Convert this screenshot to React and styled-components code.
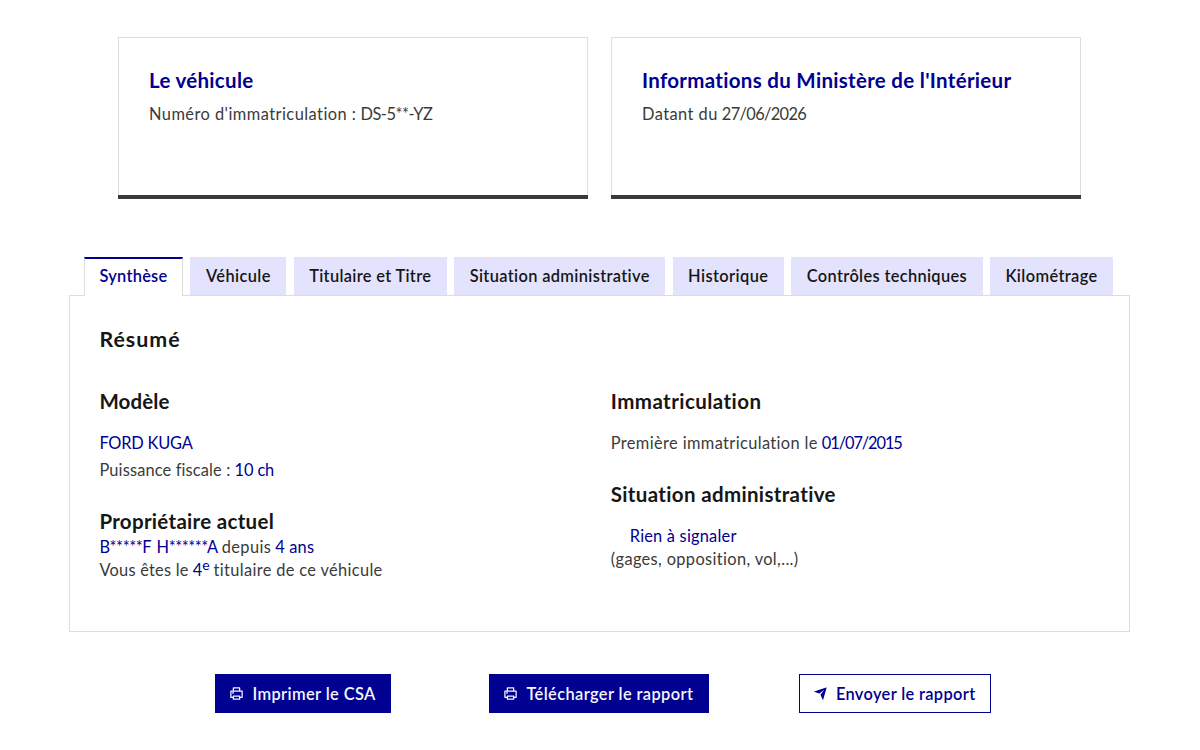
import React from "react";
import styled, { createGlobalStyle } from "styled-components";

const GlobalStyle = createGlobalStyle`
  * {
    box-sizing: border-box;
  }
  body {
    margin: 0;
    background-color: #ffffff;
    color: #3a3a3a;
    font-family: Lato, "Open Sans", sans-serif;
    font-size: 16.4px;
    line-height: 23px;
  }
  h2, h3, p {
    margin: 0;
  }
`;

const Page = styled.div`
  width: 1200px;
  height: 750px;
  padding: 37px 70px 0 69px;
  overflow: hidden;
`;

const Cards = styled.div`
  display: flex;
  gap: 23px;
  padding: 0 49px;
`;

const Card = styled.div`
  width: 470px;
  height: 162px;
  padding-bottom: 4px;
  background-color: #3a3a3a;
`;

const CardBody = styled.div`
  height: 100%;
  padding: 29px 30px;
  border: 1px solid #dddddd;
  border-bottom: 0;
  background-color: #ffffff;
`;

const Title = styled.h3`
  color: ${(p) => (p.$blue ? "#000091" : "#161616")};
  font-size: ${(p) => p.$size || 20.5}px;
  font-weight: 700;
  line-height: 27px;
  letter-spacing: ${(p) => p.$ls || 0.3}px;
  white-space: nowrap;
`;

const Text = styled.p`
  display: flex;
  align-items: baseline;
  gap: 4px;
  margin-top: ${(p) => p.$top || 0}px;
  padding-left: ${(p) => p.$indent || 0}px;
  height: 23px;
  white-space: nowrap;
`;

const Part = styled.span`
  color: ${(p) => (p.$blue ? "#000091" : "inherit")};
  letter-spacing: ${(p) => p.$ls || 0}px;
  word-spacing: ${(p) => p.$ws || 0}px;

  sup {
    font-size: 14px;
    line-height: 0;
    vertical-align: 6px;
  }
`;

const Tabs = styled.div`
  display: flex;
  gap: 7.4px;
  margin-top: 58px;
  padding-left: 15px;
`;

const Tab = styled.button`
  position: relative;
  height: 38px;
  margin: 0;
  padding: 0 15.5px 1px;
  border: 0;
  background-color: #e3e3fd;
  color: #161616;
  font-family: inherit;
  font-size: 16.4px;
  font-weight: 600;
  letter-spacing: ${(p) => p.$ls}px;
  white-space: nowrap;
  cursor: pointer;

  &[aria-selected="true"] {
    height: 39px;
    margin-bottom: -1px;
    padding: 0 14.5px 4px;
    border: 1px solid #dddddd;
    border-top: 2px solid #000091;
    border-bottom: 0;
    background-color: #ffffff;
    color: #000091;
  }
`;

const Panel = styled.div`
  height: 337px;
  padding: 30px 30px 30px 29.4px;
  border: 1px solid #dddddd;
`;

const Columns = styled.div`
  display: grid;
  grid-template-columns: 511.4px 1fr;
  margin-top: 35px;
`;

const Block = styled.div`
  margin-bottom: 27px;
`;

const Actions = styled.div`
  display: flex;
  margin-top: 42.4px;
  padding-left: 146.4px;
`;

const Button = styled.button`
  display: flex;
  align-items: center;
  gap: ${(p) => p.$space || 8}px;
  width: ${(p) => p.$w}px;
  height: 39px;
  margin-right: ${(p) => p.$gap || 0}px;
  padding: 0 0 0 13px;
  border: 1px solid #000091;
  background-color: ${(p) => (p.$outline ? "#ffffff" : "#000091")};
  color: ${(p) => (p.$outline ? "#000091" : "#f5f5fe")};
  font-family: inherit;
  font-size: 16.4px;
  font-weight: 600;
  letter-spacing: ${(p) => (p.$outline ? 0.35 : 0.4)}px;
  white-space: nowrap;
  cursor: pointer;

  svg {
    width: 15px;
    height: 15px;
    flex: none;
  }
`;

const PrinterIcon = () => (
  <svg viewBox="0 0 24 24" fill="currentColor">
    <path d="M17 2a1 1 0 0 1 1 1v4h3a1 1 0 0 1 1 1v10a1 1 0 0 1-1 1h-3v2a1 1 0 0 1-1 1H7a1 1 0 0 1-1-1v-2H3a1 1 0 0 1-1-1V8a1 1 0 0 1 1-1h3V3a1 1 0 0 1 1-1h10zm-1 15H8v3h8v-3zm4-8H4v8h2v-1a1 1 0 0 1 1-1h10a1 1 0 0 1 1 1v1h2V9zM8 10v2H5v-2h3zm8-6H8v3h8V4z" />
  </svg>
);

const SendIcon = () => (
  <svg viewBox="0 0 24 24" fill="currentColor">
    <path d="M1.946 9.315c-.522-.174-.527-.455.01-.634l19.087-6.362c.529-.176.832.12.684.638l-5.454 19.086c-.15.529-.455.547-.679.045L12 14l6-8-8 6-8.054-2.685z" />
  </svg>
);

const tabs = [
  { label: "Synthèse", ls: 0.26 },
  { label: "Véhicule", ls: 0.4 },
  { label: "Titulaire et Titre", ls: 0.33 },
  { label: "Situation administrative", ls: 0.35 },
  { label: "Historique", ls: 0.41 },
  { label: "Contrôles techniques", ls: 0.34 },
  { label: "Kilométrage", ls: 0.38 },
];

function App() {
  return (
    <>
      <GlobalStyle />
      <Page>
        <Cards>
          <Card>
            <CardBody>
              <Title $blue>Le véhicule</Title>
              <Text $top={8}>
                <Part $ls={0.46}>Numéro d'immatriculation :</Part>
                <Part $ls={-0.45}>DS-5**-YZ</Part>
              </Text>
            </CardBody>
          </Card>
          <Card>
            <CardBody>
              <Title $blue>Informations du Ministère de l'Intérieur</Title>
              <Text $top={8}>
                <Part $ls={0.45}>Datant du</Part>
                <Part $ls={-0.65}>27/06/2026</Part>
              </Text>
            </CardBody>
          </Card>
        </Cards>

        <Tabs role="tablist">
          {tabs.map((tab, i) => (
            <Tab key={tab.label} role="tab" aria-selected={i === 0} $ls={tab.ls}>
              {tab.label}
            </Tab>
          ))}
        </Tabs>
        <Panel>
          <Title as="h2" $size={21.4} $ls={1}>Résumé</Title>
          <Columns>
            <div>
              <Block>
                <Title $ls={0.1}>Modèle</Title>
                <Text $top={16}>
                  <Part $blue $ls={-0.2}>FORD KUGA</Part>
                </Text>
                <Text $top={4}>
                  <Part $ls={0.14}>Puissance fiscale :</Part>
                  <Part $blue $ls={-0.1}>10 ch</Part>
                </Text>
              </Block>
              <Block>
                <Title>Propriétaire actuel</Title>
                <Text>
                  <Part $blue $ls={-0.42} $ws={2}>B*****F H******A</Part>
                  <Part $ls={0.4}>depuis</Part>
                  <Part $blue $ls={0.15}>4 ans</Part>
                </Text>
                <Text>
                  <Part $ls={0.23}>Vous êtes le</Part>
                  <Part $blue>4<sup>e</sup></Part>
                  <Part $ls={0.34}>titulaire de ce véhicule</Part>
                </Text>
              </Block>
            </div>
            <div>
              <Block>
                <Title $ls={0.45}>Immatriculation</Title>
                <Text $top={16}>
                  <Part $ls={0.37}>Première immatriculation le</Part>
                  <Part $blue $ls={-1.1}>01/07/2015</Part>
                </Text>
              </Block>
              <Block>
                <Title $ls={0.34}>Situation administrative</Title>
                <Text $top={16} $indent={19}>
                  <Part $blue $ls={0.2}>Rien à signaler</Part>
                </Text>
                <Text>
                  <Part $ls={0.35}>(gages, opposition, vol,...)</Part>
                </Text>
              </Block>
            </div>
          </Columns>
        </Panel>

        <Actions>
          <Button $w={175.5} $gap={98}>
            <PrinterIcon />
            Imprimer le CSA
          </Button>
          <Button $w={220} $gap={90} $space={8.5}>
            <PrinterIcon />
            Télécharger le rapport
          </Button>
          <Button $w={192} $outline>
            <SendIcon />
            Envoyer le rapport
          </Button>
        </Actions>
      </Page>
    </>
  );
}

export default App;
